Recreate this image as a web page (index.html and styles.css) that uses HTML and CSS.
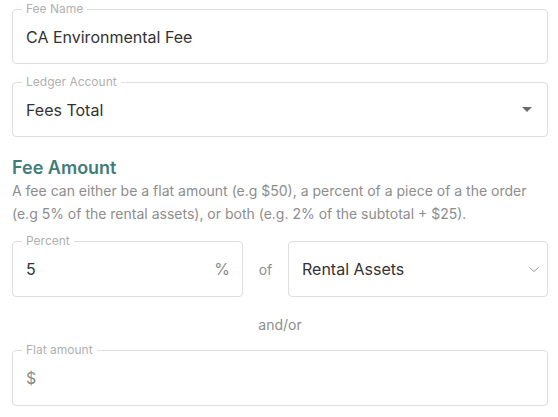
FILE: index.html
```html
<!DOCTYPE html>
<html lang="en">

<head>
    <meta charset="UTF-8">
    <meta name="viewport" content="width=device-width, initial-scale=1.0">
    <title>Edit Fee</title>
    <link rel="stylesheet" href="styles.css">
</head>

<body>

    <form class="fee-form">
        <div class="field">
            <span class="field-label">Fee Name</span>
            <span class="field-value">CA Environmental Fee</span>
        </div>

        <div class="field field-select">
            <span class="field-label">Ledger Account</span>
            <span class="field-value">Fees Total</span>
            <svg class="caret" width="10" height="5" viewBox="0 0 10 5">
                <path d="M0 0 L10 0 L5 5 Z" fill="#6b6b6b" />
            </svg>
        </div>

        <h2 class="section-title">Fee Amount</h2>
        <p class="section-text">A fee can either be a flat amount (e.g $50), a percent of a piece of a the order (e.g 5% of the rental assets), or both (e.g. 2% of the subtotal + $25).</p>

        <div class="percent-row">
            <div class="field field-percent">
                <span class="field-label">Percent</span>
                <span class="field-value">5</span>
                <span class="adornment">%</span>
            </div>
            <span class="of">of</span>
            <div class="field field-select plain">
                <span class="field-value">Rental Assets</span>
                <svg class="chevron" width="10" height="5" viewBox="0 0 10 5">
                    <path d="M0.5 0.5 L5 4.5 L9.5 0.5" fill="none" stroke="#9a9a9a" stroke-width="1" />
                </svg>
            </div>
        </div>

        <div class="and-or">and/or</div>

        <div class="field field-tall">
            <span class="field-label">Flat amount</span>
            <span class="adornment start">$</span>
        </div>
    </form>

</body>

</html>
```

FILE: styles.css
```css
body {
    font-family: 'Inter', 'Liberation Sans', sans-serif;
    margin: 0;
    padding: 9px 10px 0 12px;
    background-color: #ffffff;
    color: #333333;
}

.fee-form {
    display: flex;
    flex-direction: column;
}

.field {
    position: relative;
    display: flex;
    align-items: center;
    box-sizing: border-box;
    height: 55px;
    padding: 0 14px 0 13px;
    border: 1px solid #dedede;
    border-radius: 4px;
}

.field + .field {
    margin-top: 18px;
}

.field-label {
    position: absolute;
    top: -8px;
    left: 9px;
    padding: 0 4px;
    background-color: #ffffff;
    font-size: 12px;
    line-height: 14px;
    color: #b0b0b0;
}

.field-value {
    flex: 1;
    font-size: 16px;
    line-height: 20px;
    color: #333333;
}

.field-select .caret {
    margin-right: 1px;
}

.adornment {
    font-size: 16px;
    line-height: 20px;
    color: #8a8a8a;
}

.section-title {
    margin: 20px 0 0;
    font-size: 18px;
    line-height: 22px;
    font-weight: 600;
    color: #3e7d78;
}

.section-text {
    margin: 0;
    font-size: 14px;
    line-height: 23px;
    color: #8d8d8d;
}

.percent-row {
    display: flex;
    align-items: center;
    margin-top: 16px;
}

.percent-row .field {
    height: 56px;
}

.field-percent {
    flex: 0 0 231px;
    padding-right: 12px;
}

.of {
    flex: 0 0 45px;
    text-align: center;
    font-size: 14px;
    color: #8d8d8d;
}

.field-select.plain {
    flex: 1;
    padding-right: 8px;
}

.and-or {
    margin: 16px 0 14px;
    text-align: center;
    font-size: 14px;
    line-height: 23px;
    color: #8d8d8d;
}

.field-tall {
    height: 56px;
}
```
